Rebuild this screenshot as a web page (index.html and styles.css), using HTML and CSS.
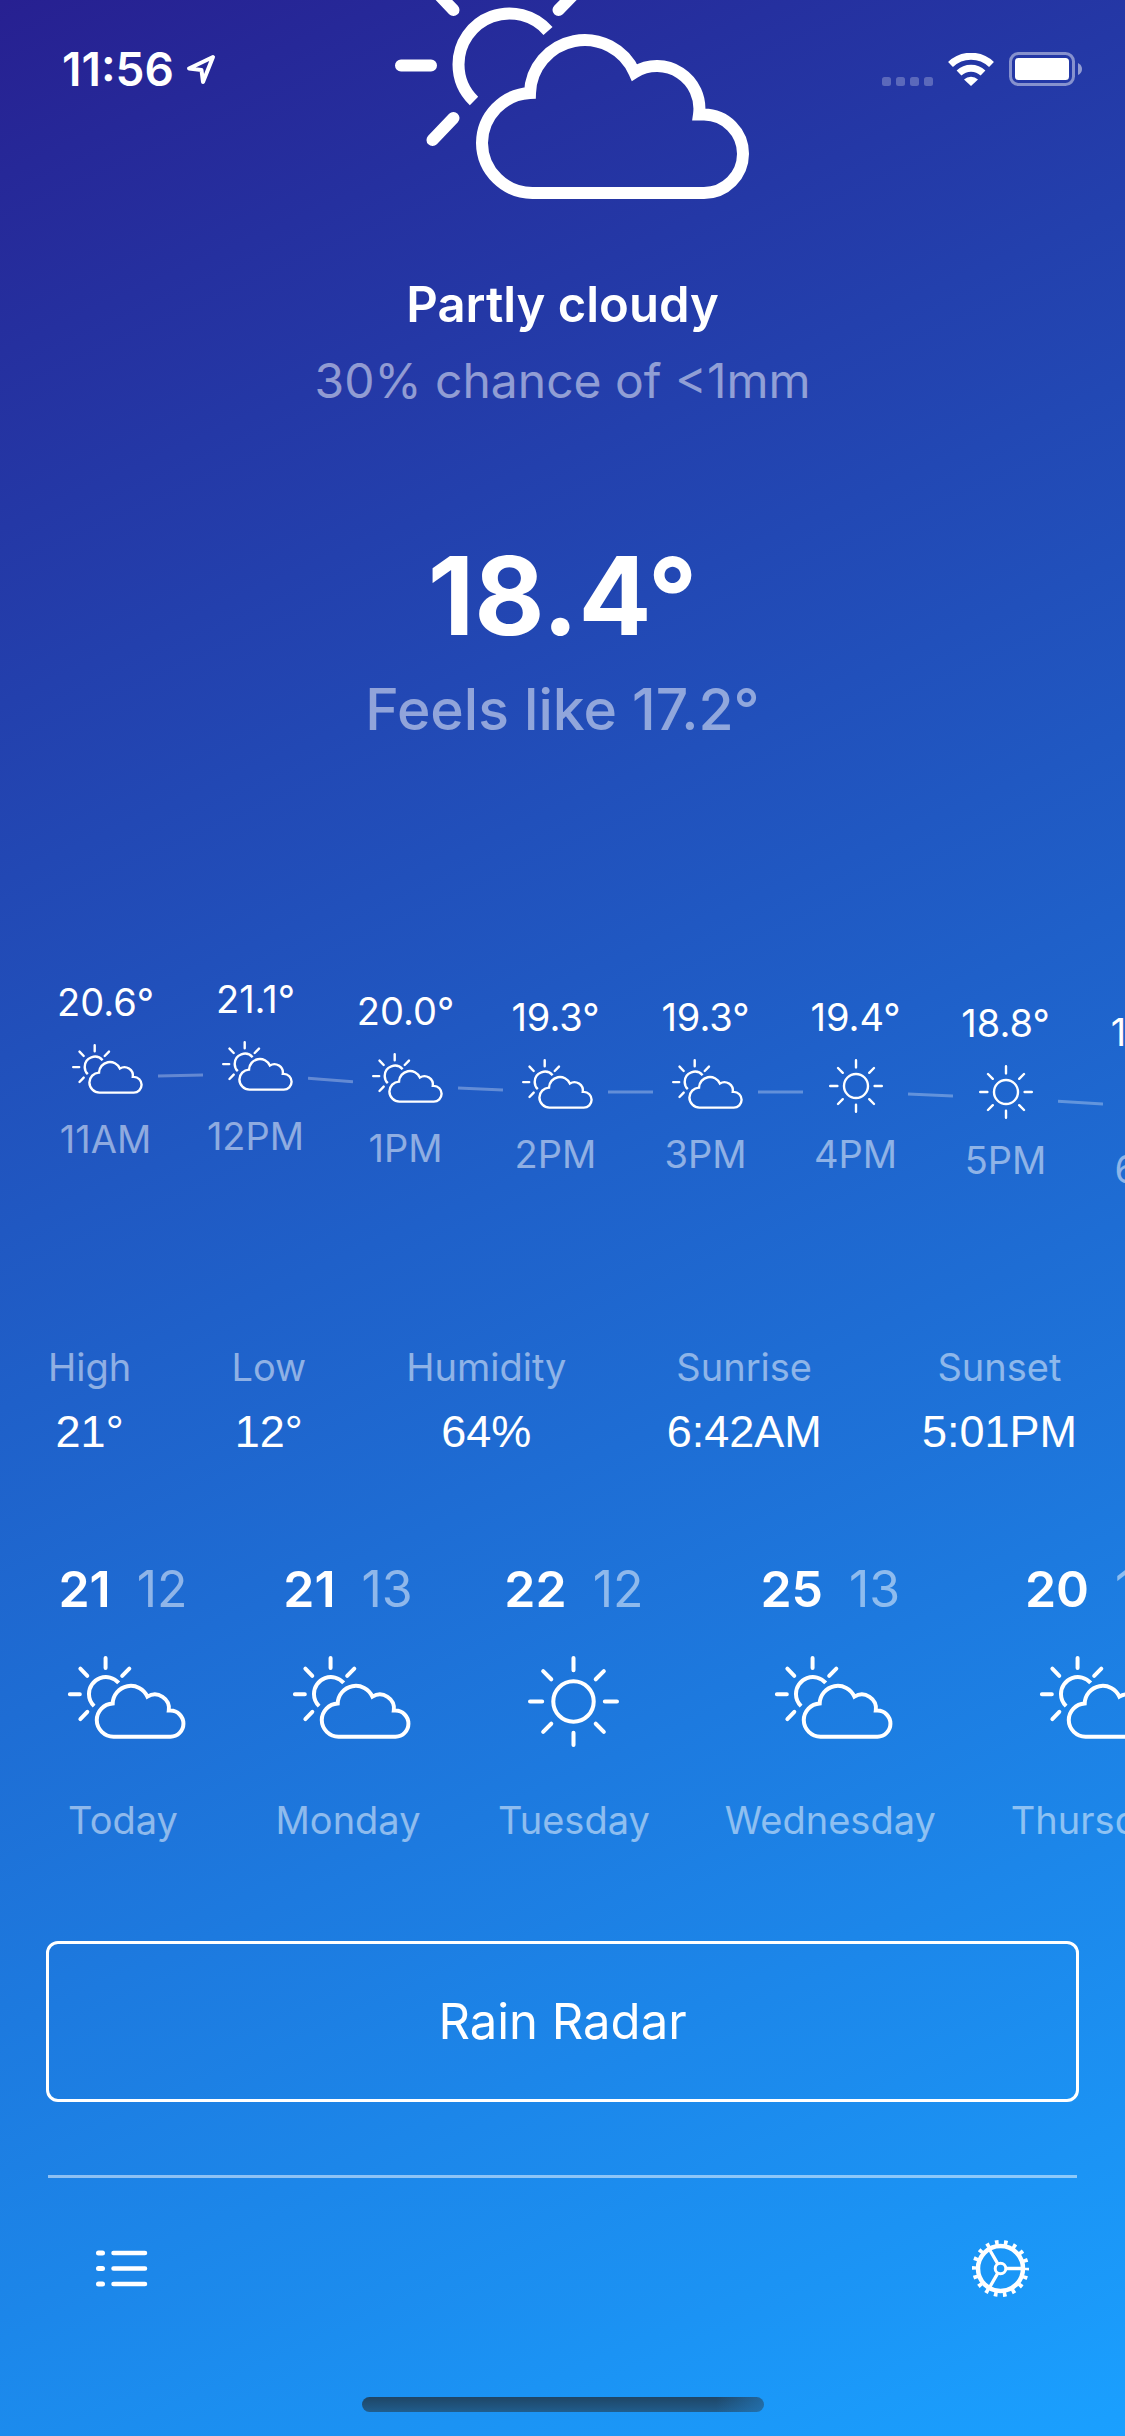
FILE: index.html
```html
<!DOCTYPE html>
<html lang="en">
<head>
<meta charset="utf-8">
<meta name="viewport" content="width=device-width, initial-scale=1">
<title>Weather</title>
<link rel="stylesheet" href="styles.css">
</head>
<body>
<svg class="sprite" aria-hidden="true">
  <symbol id="partly-cloudy" viewBox="375 -50 375 250">
    <g fill="none" stroke="currentColor" stroke-width="12">
      <path stroke-linecap="round" d="M401 65.500H431M508.500 -44V-14M432.500 -12L453.500 10M580 -12L558.500 10M453.500 118L432.500 140"/>
      <path d="M548 31A51 51 0 0 0 458.500 64.500A51 51 0 0 0 474 101"/>
      <path d="M533 193A50.500 50.500 0 0 1 482 143A50.500 50.500 0 0 1 530 93A54.600 54.600 0 0 1 634.500 72.500A42.500 42.500 0 0 1 699 114.500H704A39.300 39.300 0 0 1 743 154A39.300 39.300 0 0 1 704 193Z"/>
    </g>
  </symbol>
  <symbol id="sunny" viewBox="0 0 90 90">
    <g fill="none" stroke="currentColor" stroke-width="4" stroke-linecap="round">
      <circle cx="45" cy="45" r="20"/>
      <path d="M45 2V14M45 76V88M2 45H14M76 45H88M15 15L23 23M75 15L67 23M15 75L23 67M75 75L67 67"/>
    </g>
  </symbol>
</svg>

<div class="screen">
  <header class="status">
    <div class="status-left">
      <span class="clock">11:56</span>
      <svg class="locate" viewBox="0 0 30 31" aria-hidden="true"><path d="M27 3L3 14.500L15.500 16L17 28Z" fill="none" stroke="currentColor" stroke-width="4" stroke-linejoin="round"/></svg>
    </div>
    <div class="status-right">
      <svg class="signal" viewBox="0 0 51 9" aria-hidden="true"><g fill="currentColor"><rect width="9" height="9" rx="2.500"/><rect x="14" width="9" height="9" rx="2.500"/><rect x="28" width="9" height="9" rx="2.500"/><rect x="42" width="9" height="9" rx="2.500"/></g></svg>
      <svg class="wifi" viewBox="0 0 46 33" aria-hidden="true"><g fill="none" stroke="currentColor" stroke-width="7"><path d="M2.500 11.500A29.500 29.500 0 0 1 43.500 11.500"/><path d="M11 20A17.500 17.500 0 0 1 35 20"/></g><path fill="currentColor" d="M23 33L16 26.500A10 10 0 0 1 30 26.500Z"/></svg>
      <svg class="battery" viewBox="0 0 73 34" aria-hidden="true"><g fill="currentColor"><rect x="6" y="6" width="54" height="22" rx="3.500"/><path opacity=".5" d="M69 11Q73 13 73 17T69 23Z"/></g><rect x="1.500" y="1.500" width="63" height="31" rx="8" fill="none" stroke="currentColor" stroke-width="3" opacity=".45"/></svg>
    </div>
  </header>

  <main>
    <section class="current">
      <svg class="icon-hero" role="img" aria-label="Partly cloudy"><use href="#partly-cloudy"/></svg>
      <h1 class="condition">Partly cloudy</h1>
      <p class="rain">30% chance of &lt;1mm</p>
      <p class="temperature">18.4°</p>
      <p class="feels">Feels like 17.2°</p>
    </section>

    <section class="hourly" aria-label="Hourly forecast">
      <div class="hour" style="margin-top:3px"><span>20.6°</span><svg class="icon-hour"><use href="#partly-cloudy"/></svg><span class="muted">11AM</span></div>
      <svg class="trend"><line x1="0" y1="5" x2="45" y2="4"/></svg>
      <div class="hour" style="margin-top:0px"><span>21.1°</span><svg class="icon-hour"><use href="#partly-cloudy"/></svg><span class="muted">12PM</span></div>
      <svg class="trend"><line x1="0" y1="7.200" x2="45" y2="10.800"/></svg>
      <div class="hour" style="margin-top:12px"><span>20.0°</span><svg class="icon-hour"><use href="#partly-cloudy"/></svg><span class="muted">1PM</span></div>
      <svg class="trend"><line x1="0" y1="17" x2="45" y2="19"/></svg>
      <div class="hour" style="margin-top:18px"><span>19.3°</span><svg class="icon-hour"><use href="#partly-cloudy"/></svg><span class="muted">2PM</span></div>
      <svg class="trend"><line x1="0" y1="21" x2="45" y2="21"/></svg>
      <div class="hour" style="margin-top:18px"><span>19.3°</span><svg class="icon-hour"><use href="#partly-cloudy"/></svg><span class="muted">3PM</span></div>
      <svg class="trend"><line x1="0" y1="21" x2="45" y2="21"/></svg>
      <div class="hour" style="margin-top:18px"><span>19.4°</span><svg class="icon-hour icon-hour-sun"><use href="#sunny"/></svg><span class="muted">4PM</span></div>
      <svg class="trend"><line x1="0" y1="23" x2="45" y2="25"/></svg>
      <div class="hour" style="margin-top:24px"><span>18.8°</span><svg class="icon-hour icon-hour-sun"><use href="#sunny"/></svg><span class="muted">5PM</span></div>
      <svg class="trend"><line x1="0" y1="30.200" x2="45" y2="32.900"/></svg>
      <div class="hour" style="margin-top:33px"><span>18.0°</span><svg class="icon-hour icon-hour-sun"><use href="#sunny"/></svg><span class="muted">6PM</span></div>
    </section>

    <dl class="stats">
      <div class="stat"><dt>High</dt><dd>21°</dd></div>
      <div class="stat"><dt>Low</dt><dd>12°</dd></div>
      <div class="stat"><dt>Humidity</dt><dd>64%</dd></div>
      <div class="stat"><dt>Sunrise</dt><dd>6:42AM</dd></div>
      <div class="stat"><dt>Sunset</dt><dd>5:01PM</dd></div>
    </dl>

    <section class="daily" aria-label="Daily forecast">
      <div class="day"><div class="range"><b>21</b><span class="muted">12</span></div><svg class="icon-day"><use href="#partly-cloudy"/></svg><span class="day-name">Today</span></div>
      <div class="day"><div class="range"><b>21</b><span class="muted">13</span></div><svg class="icon-day"><use href="#partly-cloudy"/></svg><span class="day-name">Monday</span></div>
      <div class="day"><div class="range"><b>22</b><span class="muted">12</span></div><svg class="icon-day icon-day-sun"><use href="#sunny"/></svg><span class="day-name">Tuesday</span></div>
      <div class="day"><div class="range"><b>25</b><span class="muted">13</span></div><svg class="icon-day"><use href="#partly-cloudy"/></svg><span class="day-name">Wednesday</span></div>
      <div class="day"><div class="range"><b>20</b><span class="muted">12</span></div><svg class="icon-day"><use href="#partly-cloudy"/></svg><span class="day-name">Thursday</span></div>
    </section>

    <button class="radar" type="button">Rain Radar</button>
  </main>

  <nav class="toolbar">
    <button class="tool" type="button" aria-label="Locations">
      <svg viewBox="0 0 57 57"><g fill="none" stroke="currentColor" stroke-width="5" stroke-linecap="round"><path d="M2.500 13H6.500M2.500 28.500H6.500M2.500 44H6.500"/><path stroke-width="4.500" d="M17.500 13H49M17.500 28.500H49M17.500 44H49"/></g></svg>
    </button>
    <button class="tool" type="button" aria-label="Settings">
      <svg viewBox="-28.5 -28.5 57 57"><g fill="none" stroke="currentColor"><circle r="22.500" stroke-width="4.500"/><circle r="26" stroke-width="5" stroke-dasharray="3.600 5.476" stroke-dashoffset="1.800"/><circle r="5.300" stroke-width="3"/><path stroke-width="3.300" d="M6 0H22M-3 -5.200L-11 -19M-3 5.200L-11 19"/></g></svg>
    </button>
  </nav>
  <div class="home-bar"></div>
</div>
</body>
</html>
```

FILE: styles.css
```css
* {
  box-sizing: border-box;
  margin: 0;
  padding: 0;
}

body {
  color: #fff;
  font-family: Inter, "Liberation Sans", sans-serif;
  font-size: 38px;
  line-height: 46px;
}

svg {
  display: block;
}

button {
  color: inherit;
  font: inherit;
  background: none;
  border: 0;
}

.sprite {
  position: absolute;
  width: 0;
  height: 0;
}

.muted {
  color: rgba(255, 255, 255, 0.5);
}

.screen {
  position: relative;
  display: flex;
  flex-direction: column;
  min-height: 100vh;
  overflow: hidden;
  background: linear-gradient(156deg, #272091, #1f60c9 48%, #1aa0ff);
}

.status {
  position: absolute;
  inset: 0 0 auto;
  display: flex;
  justify-content: space-between;
  padding: 42px 43px 0 62px;
}

.status-left {
  display: flex;
  align-items: center;
  gap: 12px;
  height: 54px;
}

.status-right {
  display: flex;
  align-items: flex-end;
  gap: 15px;
  height: 44px;
}

.clock {
  font-size: 46px;
  line-height: 54px;
  font-weight: 600;
}

.locate {
  width: 30px;
  height: 31px;
}

.signal {
  width: 51px;
  height: 9px;
  opacity: 0.25;
}

.wifi {
  width: 46px;
  height: 33px;
}

.battery {
  width: 73px;
  height: 34px;
}

.current {
  display: flex;
  flex-direction: column;
  align-items: center;
  margin-top: -50px;
}

.icon-hero {
  width: 375px;
  height: 250px;
  margin-bottom: 67px;
}

.condition {
  font-size: 49px;
  line-height: 76px;
  font-weight: 600;
}

.rain {
  font-size: 48px;
  line-height: 76px;
}

.rain,
.feels {
  color: rgba(255, 255, 255, 0.5);
}

.temperature {
  margin: 117px 0 16px;
  font-size: 108px;
  line-height: 120px;
  font-weight: 700;
}

.feels {
  font-size: 57px;
  line-height: 76px;
  font-weight: 500;
}

.hourly {
  display: flex;
  align-items: flex-start;
  margin-top: 228px;
  padding: 0 53px;
  overflow-x: auto;
  scrollbar-width: none;
}

.hour {
  display: flex;
  flex: none;
  flex-direction: column;
  align-items: center;
  width: 105px;
}

.icon-hour {
  width: 75px;
  height: 50px;
  margin: 19px 0 22px;
}

.icon-hour-sun {
  width: 54px;
  height: 54px;
  margin-bottom: 18px;
}

.trend {
  flex: none;
  width: 45px;
  height: 40px;
  margin-top: 95px;
  stroke: rgba(255, 255, 255, 0.3);
  stroke-width: 3;
}

.stats {
  display: flex;
  justify-content: space-between;
  margin-top: 152px;
  padding: 0 48px;
}

.stat {
  display: flex;
  flex-direction: column;
  align-items: center;
  gap: 16px;
}

.stat dt,
.day-name {
  color: rgba(255, 255, 255, 0.5);
}

.stat dd {
  font-family: "Liberation Sans", Arial, sans-serif;
  font-size: 45px;
  line-height: 52px;
}

.daily {
  display: flex;
  gap: 75px;
  margin-top: 101px;
  padding: 0 48px;
  overflow-x: auto;
  scrollbar-width: none;
}

.day {
  display: flex;
  flex: none;
  flex-direction: column;
  align-items: center;
  min-width: 150px;
}

.range {
  display: flex;
  gap: 26px;
  font-size: 50px;
  line-height: 60px;
}

.range b {
  font-weight: 600;
}

.icon-day {
  width: 125px;
  height: 83px;
  margin: 37px 0 58px;
}

.icon-day-sun {
  width: 91px;
  height: 91px;
  margin-bottom: 50px;
}

main {
  display: flex;
  flex-direction: column;
}

.radar {
  margin: 98px 46px 0;
  padding: 47px 0;
  border: 3px solid #fff;
  border-radius: 12px;
  font-size: 49px;
  line-height: 61px;
}

.toolbar {
  display: flex;
  justify-content: space-between;
  margin: 73px 48px 0;
  padding: 62px 48px 0;
  border-top: 3px solid rgba(255, 255, 255, 0.5);
}

.tool {
  width: 57px;
  height: 57px;
}

.home-bar {
  width: 402px;
  height: 15px;
  margin: auto auto 24px;
  border-radius: 8px;
  background: linear-gradient(90deg, transparent 88%, rgba(36, 126, 196, 0.6)), linear-gradient(#1f4565, #205d8d);
}
```
